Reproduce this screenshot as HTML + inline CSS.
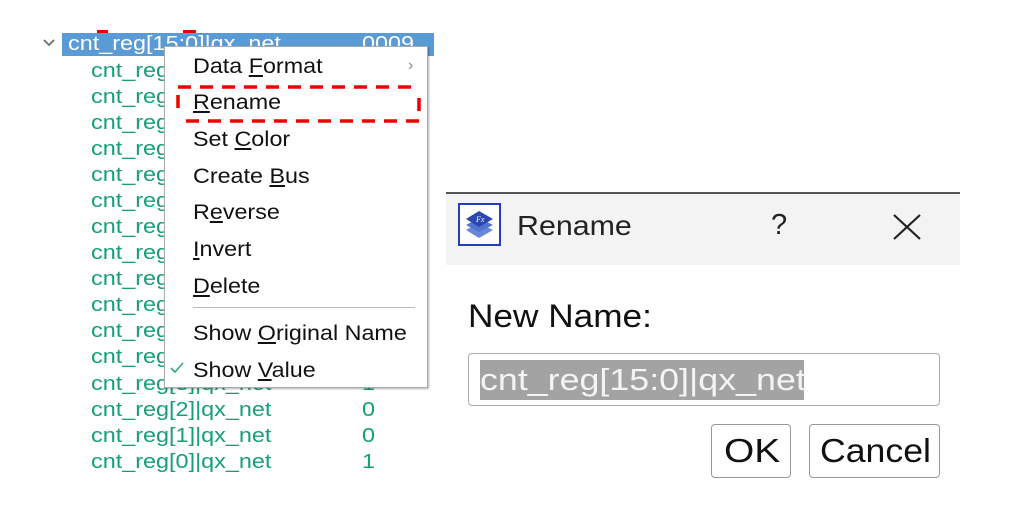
<!DOCTYPE html>
<html><head><meta charset="utf-8"><style>
body{margin:0;width:1020px;height:513px;background:#fff;position:relative;overflow:hidden;font-family:"Liberation Sans",Arial,sans-serif}
.a{position:absolute;white-space:nowrap;transform-origin:left center}
.g{color:#16a07a;font-size:20px;line-height:26px;transform:scaleX(1.17)}
.m{font-size:21px;color:#111;line-height:26px;transform:scaleX(1.11)}
u{text-decoration:underline;text-underline-offset:2px}
</style></head><body>
<div class="a" style="left:97px;top:30px;width:11px;height:4px;background:#e00"></div>
<div class="a" style="left:183px;top:30px;width:13px;height:4px;background:#e00"></div>
<div class="a" style="left:62px;top:33px;width:372px;height:23px;background:#5b9bd5"></div>
<svg class="a" style="left:42px;top:38px" width="14" height="10"><path d="M2 2 L7 7 L12 2" stroke="#666" stroke-width="1.6" fill="none"/></svg>
<div class="a g" style="left:68px;top:31px;color:#fff">cnt_reg[15:0]|qx_net</div>
<div class="a g" style="left:362px;top:31px;color:#fff">0009</div>
<div class="a g" style="left:91px;top:58px">cnt_reg</div>
<div class="a g" style="left:91px;top:84px">cnt_reg</div>
<div class="a g" style="left:91px;top:110px">cnt_reg</div>
<div class="a g" style="left:91px;top:136px">cnt_reg</div>
<div class="a g" style="left:91px;top:162px">cnt_reg</div>
<div class="a g" style="left:91px;top:188px">cnt_reg</div>
<div class="a g" style="left:91px;top:214px">cnt_reg</div>
<div class="a g" style="left:91px;top:240px">cnt_reg</div>
<div class="a g" style="left:91px;top:266px">cnt_reg</div>
<div class="a g" style="left:91px;top:292px">cnt_reg</div>
<div class="a g" style="left:91px;top:318px">cnt_reg</div>
<div class="a g" style="left:91px;top:344px">cnt_reg</div>
<div class="a g" style="left:91px;top:371px">cnt_reg[3]|qx_net</div>
<div class="a g" style="left:362px;top:371px">1</div>
<div class="a g" style="left:91px;top:397px">cnt_reg[2]|qx_net</div>
<div class="a g" style="left:362px;top:397px">0</div>
<div class="a g" style="left:91px;top:423px">cnt_reg[1]|qx_net</div>
<div class="a g" style="left:362px;top:423px">0</div>
<div class="a g" style="left:91px;top:449px">cnt_reg[0]|qx_net</div>
<div class="a g" style="left:362px;top:449px">1</div>

<div class="a" style="left:164px;top:46px;width:262px;height:340px;background:#fff;border:1px solid #aaa;box-shadow:1px 1px 2px rgba(0,0,0,.3)"></div>
<div class="a m" style="left:193px;top:54px">Data <u>F</u>ormat</div>
<div class="a" style="left:408px;top:53px;color:#888;font-size:16px;line-height:26px">&#8250;</div>
<div class="a m" style="left:193px;top:90px"><u>R</u>ename</div>
<div class="a m" style="left:193px;top:127px">Set <u>C</u>olor</div>
<div class="a m" style="left:193px;top:164px">Create <u>B</u>us</div>
<div class="a m" style="left:193px;top:200px">R<u>e</u>verse</div>
<div class="a m" style="left:193px;top:237px"><u>I</u>nvert</div>
<div class="a m" style="left:193px;top:274px"><u>D</u>elete</div>
<div class="a" style="left:193px;top:307px;width:222px;height:1px;background:#bbb"></div>
<div class="a m" style="left:193px;top:321px">Show <u>O</u>riginal Name</div>
<div class="a m" style="left:193px;top:358px">Show <u>V</u>alue</div>
<svg class="a" style="left:169px;top:361px" width="16" height="14"><path d="M2 7 L6 11 L14 2" stroke="#2aa58a" stroke-width="1.6" fill="none"/></svg>
<svg class="a" style="left:172px;top:82px" width="252" height="44"><path d="M6 5 H247 M247 16 V30 M247 39 H5 M6 26 V12" stroke="#e00" stroke-width="3.5" stroke-dasharray="13 9" fill="none"/></svg>

<div class="a" style="left:446px;top:192px;width:514px;height:2px;background:#555"></div>
<div class="a" style="left:446px;top:194px;width:514px;height:71px;background:#f3f3f3"></div>
<svg class="a" style="left:458px;top:203px" width="43" height="43"><rect x="1" y="1" width="41" height="41" fill="#fff" stroke="#2340b8" stroke-width="2"/><path d="M8 27 L21 20 L35 27 L21 35Z" fill="#6a86d8"/><path d="M8 22 L21 15 L35 22 L21 29Z" fill="#5473cf"/><path d="M8 16 L21 8 L35 16 L21 24Z" fill="#2b47b5"/><text x="18" y="19" font-size="8" fill="#fff" font-style="italic" font-family="Liberation Serif">Fx</text></svg>
<div class="a" style="left:517px;top:210px;font-size:28px;color:#222;transform:scaleX(1.085)">Rename</div>
<div class="a" style="left:771px;top:209px;font-size:29px;color:#222">?</div>
<svg class="a" style="left:892px;top:213px" width="30" height="28"><path d="M2 2 L28 26 M28 2 L2 26" stroke="#222" stroke-width="2.2"/></svg>
<div class="a" style="left:468px;top:298px;font-size:32px;color:#111;transform:scaleX(1.1)">New Name:</div>
<div class="a" style="left:468px;top:353px;width:470px;height:51px;border:1px solid #aaa;border-radius:4px;background:#fff"></div>
<div class="a" style="left:480px;top:360px;width:324px;height:40px;background:#a3a3a3"></div>
<div class="a" style="left:480px;top:361px;font-size:31px;color:#f4f4f4;line-height:38px;transform:scaleX(1.155)">cnt_reg[15:0]|qx_net</div>
<div class="a" style="left:711px;top:424px;width:78px;height:52px;border:1px solid #999;border-radius:4px;background:#fff"></div>
<div class="a" style="left:724px;top:432px;font-size:33px;color:#111;transform:scaleX(1.18)">OK</div>
<div class="a" style="left:809px;top:424px;width:129px;height:52px;border:1px solid #999;border-radius:4px;background:#fff"></div>
<div class="a" style="left:820px;top:432px;font-size:33px;color:#111;transform:scaleX(1.08)">Cancel</div>
</body></html>
